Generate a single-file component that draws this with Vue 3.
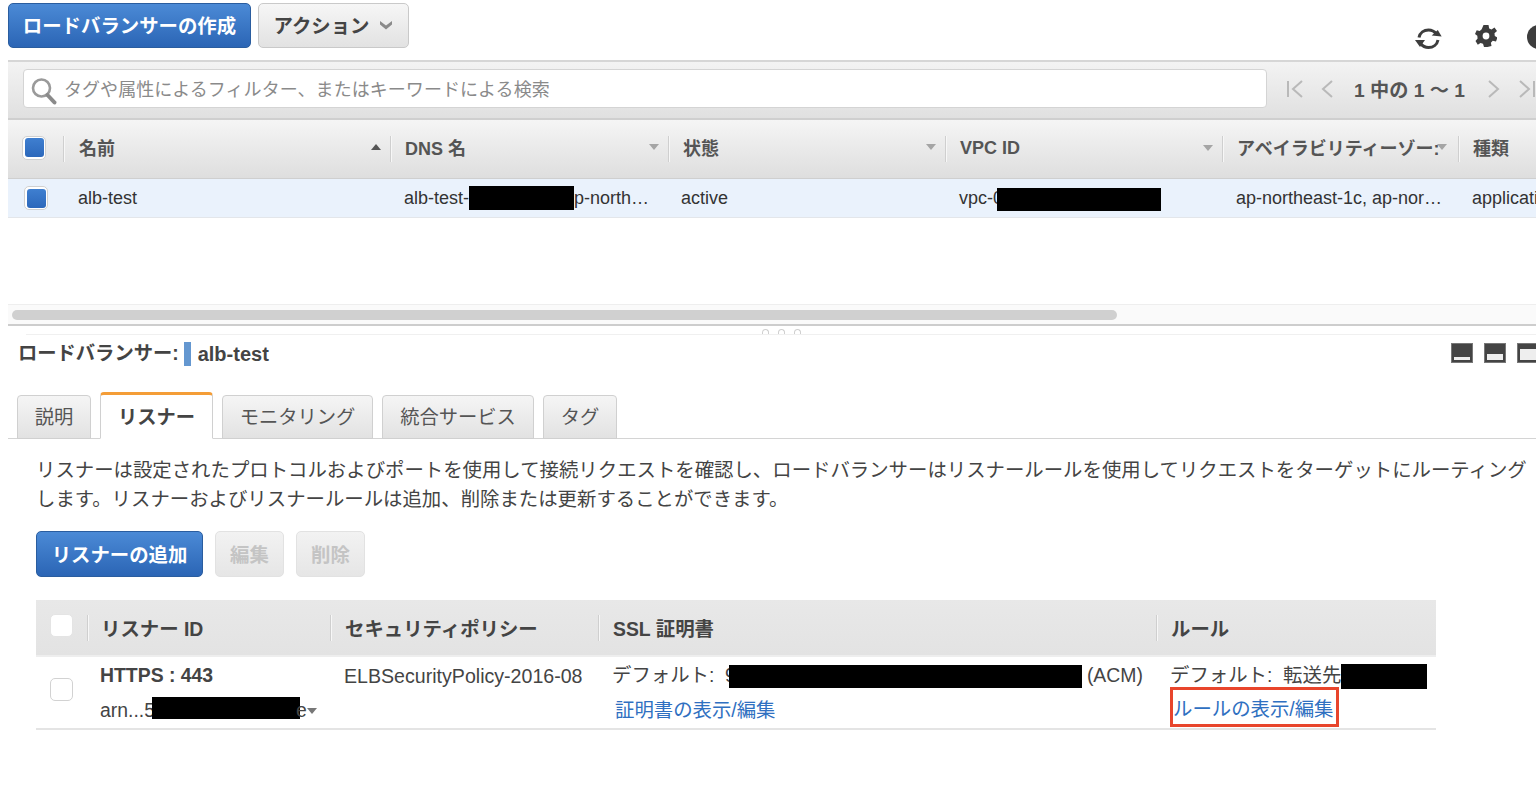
<script setup>
const topCols = [
  { label: '名前', caret: 'up', cls: 'c-name' },
  { label: 'DNS 名', caret: 'down', cls: 'c-std' },
  { label: '状態', caret: 'down', cls: 'c-std2' },
  { label: 'VPC ID', caret: 'down', cls: 'c-std2 latin' },
  { label: 'アベイラビリティーゾー:', caret: 'down', cls: 'c-az' },
  { label: '種類', caret: '', cls: 'c-type' }
]
const tabs = [
  { label: '説明', w: 74 },
  { label: 'リスナー', w: 113, active: true },
  { label: 'モニタリング', w: 151 },
  { label: '統合サービス', w: 152 },
  { label: 'タグ', w: 74 }
]
</script>

<template>
  <div class="page">
    <header class="top">
      <button class="btn primary create">ロードバランサーの作成</button>
      <button class="btn plain action">アクション
        <svg class="chev" viewBox="0 0 14 10" width="14" height="10"><path d="M1 1l6 4.500L13 1v3.500L7 9.500 1 4.500z" fill="#8a8a8a"/></svg>
      </button>
      <div class="top-icons">
        <svg width="29" height="27" viewBox="0 0 29 27" class="ic-refresh">
          <path d="M5 12.500C6 7.500 10 5 14.500 5c3.500 0 6 1.500 8 4" fill="none" stroke="#3d3d3d" stroke-width="3"/>
          <path d="M24 15c-1 5-5 7.500-9.500 7.500-3.500 0-6-1.500-8-4" fill="none" stroke="#3d3d3d" stroke-width="3"/>
          <path d="M18 11h10l-4.500-6z" fill="#3d3d3d" transform="rotate(6 23 8)"/>
          <path d="M1 15h10l-5 7z" fill="#3d3d3d"/>
        </svg>
        <svg width="22" height="22" viewBox="0 0 22 22" class="ic-gear">
          <g fill="#3d3d3d">
            <path d="M8.500 0h5l.7 3.400 2.300 1 3-1.900 2.500 3.500-2.500 2.200.3 2.800 2.700 1.500-1.500 4-3.300-.7-1.800 1.900.6 3.300-4 1h-3.500l-1-3.300-2.500-.8-2.700 1.900L.500 15.900l2.100-2.400-.3-2.700L0 9l1.700-3.800 3 .8 2-1.800z"/>
          </g>
          <circle cx="11" cy="11" r="3.400" fill="#fff"/>
        </svg>
        <span class="ic-info"></span>
      </div>
    </header>

    <section class="filter">
      <div class="search">
        <svg width="28" height="30" viewBox="0 0 28 30">
          <circle cx="11.500" cy="12" r="8.500" fill="none" stroke="#9a9a9a" stroke-width="2.600"/>
          <path d="M17.500 19l7 7.500" stroke="#8a8a8a" stroke-width="4" stroke-linecap="round"/>
        </svg>
        <span class="search-text">タグや属性によるフィルター、またはキーワードによる検索</span>
      </div>
      <div class="pager">
        <svg width="18" height="20" viewBox="0 0 18 20"><path d="M2 2v16M16 2 7 10l9 8" fill="none" stroke="#b9b9b9" stroke-width="2"/></svg>
        <svg class="p2" width="12" height="20" viewBox="0 0 12 20"><path d="M11 2 2 10l9 8" fill="none" stroke="#b9b9b9" stroke-width="2"/></svg>
        <span class="ptext">1 中の 1 〜 1</span>
        <svg class="p3" width="12" height="20" viewBox="0 0 12 20"><path d="M1 2l9 8-9 8" fill="none" stroke="#b9b9b9" stroke-width="2"/></svg>
        <svg class="p4" width="18" height="20" viewBox="0 0 18 20"><path d="M2 2l9 8-9 8M16 2v16" fill="none" stroke="#b9b9b9" stroke-width="2"/></svg>
      </div>
    </section>

    <section class="grid-top">
      <div class="thead">
        <div class="th c-check"><span class="check"><i></i></span></div>
        <div v-for="c in topCols" :key="c.label" class="th" :class="c.cls">
          <span class="th-label">{{ c.label }}</span>
          <span v-if="c.caret" class="caret" :class="c.caret"></span>
        </div>
      </div>
      <div class="trow">
        <div class="td c-check"><span class="check row-check"><i></i></span></div>
        <div class="td c-name">alb-test</div>
        <div class="td c-std">alb-test-<b class="mask m-dns"></b>p-north…</div>
        <div class="td c-active">active</div>
        <div class="td c-std">vpc-0<b class="mask m-vpc"></b></div>
        <div class="td c-az">ap-northeast-1c, ap-nor…</div>
        <div class="td c-type">applicati</div>
      </div>
    </section>

    <div class="scroll"><div class="thumb"></div></div>
    <div class="grip"><i></i><i></i><i></i></div>

    <section class="detail-head">
      <div class="title">ロードバランサー: <span class="swatch"></span> <span class="title-name">alb-test</span></div>
      <div class="layout-icons">
        <span class="li li1"></span>
        <span class="li li2"></span>
        <span class="li li3"></span>
      </div>
    </section>

    <nav class="tabs">
      <div
        v-for="t in tabs"
        :key="t.label"
        class="tab"
        :class="{ active: t.active }"
        :style="{ width: t.w + 'px' }"
      >{{ t.label }}</div>
    </nav>

    <section class="panel">
      <p class="desc">リスナーは設定されたプロトコルおよびポートを使用して接続リクエストを確認し、ロードバランサーはリスナールールを使用してリクエストをターゲットにルーティングします。リスナーおよびリスナールールは追加、削除または更新することができます。</p>
      <div class="actions">
        <button class="btn primary add">リスナーの追加</button>
        <button class="btn off edit">編集</button>
        <button class="btn off del">削除</button>
      </div>

      <div class="ltable">
        <div class="lhead">
          <div class="lh l1"><span class="box head-box"></span></div>
          <div class="lh l2">リスナー ID</div>
          <div class="lh l3">セキュリティポリシー</div>
          <div class="lh l4">SSL 証明書</div>
          <div class="lh l5">ルール</div>
        </div>
        <div class="lrow">
          <div class="lc l1"><span class="box"></span></div>
          <div class="lc l2">
            <div class="line strong">HTTPS : 443</div>
            <div class="line">arn...5<b class="mask m-arn"></b><span class="arn-end">e</span><span class="tiny-caret"></span></div>
          </div>
          <div class="lc l3"><div class="line policy">ELBSecurityPolicy-2016-08</div></div>
          <div class="lc l4">
            <div class="line cjk">デフォルト:&nbsp; 9<b class="mask m-cert"></b><span class="acm">(ACM)</span></div>
            <div class="line cjk"><a class="link cert-link">証明書の表示/編集</a></div>
          </div>
          <div class="lc l5">
            <div class="line cjk">デフォルト:&nbsp; 転送先<b class="mask m-rule"></b></div>
            <div class="line"><a class="link rule-link">ルールの表示/編集</a></div>
          </div>
        </div>
      </div>
    </section>
  </div>
</template>

<style scoped>
.page {
  width: 1536px;
  height: 795px;
  overflow: hidden;
  background: #fff;
  color: #444;
  font-family: "Liberation Sans", "Noto Sans CJK JP", sans-serif;
  font-size: 18px;
}
.btn {
  box-sizing: border-box;
  font-family: inherit;
  font-weight: 700;
  font-size: 19.4px;
  border-radius: 5px;
  padding: 0 0 2px;
  display: inline-flex;
  align-items: center;
  justify-content: center;
}
.primary {
  color: #fff;
  background: linear-gradient(#4b8ad6, #2b65b5);
  border: 1px solid #2a5d9f;
}
.plain {
  color: #444;
  background: linear-gradient(#f6f6f6, #e2e2e2);
  border: 1px solid #c9c9c9;
}
.off {
  color: #c4c4c4;
  background: linear-gradient(#f2f2f2, #e6e6e6);
  border: 1px solid #e2e2e2;
}
.top {
  height: 60px;
  box-sizing: border-box;
  padding: 3px 0 0 8px;
  display: flex;
  align-items: flex-start;
}
.create { width: 243px; height: 45px; }
.action { width: 151px; height: 45px; margin-left: 7px; gap: 10px; }
.top-icons {
  margin-left: auto;
  display: flex;
  align-items: flex-start;
  padding-top: 22px;
  margin-right: -15px;
}
.ic-gear { margin-left: 32px; }
.ic-info {
  width: 24px;
  height: 24px;
  margin-left: 30px;
  border-radius: 50%;
  background: #3d3d3d;
}

.filter {
  margin-left: 8px;
  height: 60px;
  box-sizing: border-box;
  border-top: 2px solid #d6d6d6;
  border-bottom: 2px solid #cfcfcf;
  background: linear-gradient(#f3f3f3, #e0e0e0);
  display: flex;
  align-items: center;
  padding: 0 0 3px 15px;
}
.search {
  width: 1245px;
  height: 39px;
  box-sizing: border-box;
  background: #fff;
  border: 1px solid #d4d4d4;
  border-radius: 4px;
  display: flex;
  align-items: center;
  padding-left: 6px;
  gap: 6px;
  color: #8a8a8a;
}
.search svg { margin-top: 4px; }
.search-text { padding-bottom: 2px; letter-spacing: 0.05px; }
.pager {
  margin-left: 19px;
  display: flex;
  align-items: center;
  flex: none;
  color: #555;
  font-weight: 700;
  font-size: 19.2px;
}
.p2 { margin-left: 17px; }
.ptext { margin-left: 21px; white-space: nowrap; }
.p3 { margin-left: 23px; }
.p4 { margin-left: 18px; }

.grid-top { margin-left: 8px; }
.thead, .trow {
  display: grid;
  grid-template-columns: 55px 327px 278px 277px 277px 236px 200px;
}
.thead {
  height: 59px;
  box-sizing: border-box;
  background: linear-gradient(#f5f5f5, #dedede);
  border-bottom: 1px solid #cfcfcf;
}
.th {
  box-sizing: border-box;
  display: flex;
  align-items: center;
  font-weight: 700;
  color: #555;
  position: relative;
  padding: 0 0 5px 15px;
  white-space: nowrap;
  overflow: hidden;
}
.th.latin { padding-bottom: 2px; }
.th.c-name { padding-left: 16px; }
.th::before {
  content: "";
  position: absolute;
  left: 0;
  top: 16px;
  bottom: 16px;
  width: 1px;
  background: #cfcfcf;
  box-shadow: 1px 0 0 #f7f7f7;
}
.th.c-check::before { display: none; }
.th.c-check { padding: 0 0 3px 14px; }
.td.c-check { padding: 0 0 0 14px; }
.th-label { flex: none; }
.c-az .th-label { width: 203px; overflow: hidden; }
.caret {
  margin-left: auto;
  margin-right: 9px;
  width: 0;
  height: 0;
  border-left: 5px solid transparent;
  border-right: 5px solid transparent;
}
.caret.up { border-bottom: 6px solid #555; }
.caret.down { border-top: 6px solid #a5a5a5; }
.c-az .caret { margin-left: -3px; }
.check {
  width: 24px;
  height: 24px;
  box-sizing: border-box;
  border: 1px solid #d0d0d0;
  border-radius: 5px;
  background: #fff;
  display: flex;
  align-items: center;
  justify-content: center;
}
.check i {
  width: 19px;
  height: 19px;
  border-radius: 3px;
  background: linear-gradient(#3f7fd0, #2c68bb);
}
.row-check { margin-left: 2px; }
.trow {
  height: 39px;
  box-sizing: border-box;
  background: #eaf2fc;
  border-bottom: 1px solid #e3e6ea;
  align-items: center;
  color: #333;
}
.td {
  padding-left: 14px;
  white-space: nowrap;
  overflow: hidden;
  display: flex;
  align-items: center;
}
.td.c-name { padding-left: 15px; }
.td.c-active { padding-left: 13px; }
.td.c-type { padding-left: 14px; }
.mask { display: inline-block; background: #000; flex: none; }
.m-dns { width: 105px; height: 24px; }
.m-vpc { width: 164px; height: 23px; margin-left: -6px; margin-top: 3px; }

.scroll {
  margin: 86px 0 0 8px;
  height: 22px;
  box-sizing: border-box;
  background: #fafafa;
  border-top: 1px solid #eee;
  border-bottom: 2px solid #cdcdcd;
  padding: 5px 0 0 4px;
}
.thumb {
  width: 1105px;
  height: 10px;
  border-radius: 5px;
  background: #d0d0d0;
}
.grip {
  margin-left: 26px;
  height: 9px;
  box-sizing: border-box;
  border-bottom: 1px solid #f0f0f0;
  display: flex;
  justify-content: center;
  align-items: flex-end;
  gap: 9px;
}
.grip i {
  width: 7px;
  height: 5px;
  box-sizing: border-box;
  border: 1px solid #cfcfcf;
  border-bottom: 0;
  border-radius: 4px 4px 0 0;
}

.detail-head {
  height: 59px;
  display: flex;
  align-items: flex-start;
  padding: 7px 0 0 18px;
  box-sizing: border-box;
}
.title {
  font-weight: 700;
  color: #444;
  font-size: 19.3px;
  line-height: 24px;
  white-space: nowrap;
  display: flex;
  align-items: center;
  gap: 5px;
}
.title-name { font-size: 20px; }
.swatch {
  display: inline-block;
  width: 7px;
  height: 24px;
  background: #6497d0;
  margin-right: 2px;
}
.layout-icons {
  margin-left: auto;
  display: flex;
  gap: 11px;
  margin-right: -3px;
  padding-top: 1px;
}
.li {
  width: 22px;
  height: 20px;
  box-sizing: border-box;
  background: #444;
  display: flex;
  align-items: flex-end;
  padding: 2px;
  border: 1px solid #777;
}
.li::after { content: ""; display: block; width: 100%; background: #eee; }
.li1::after { height: 3px; }
.li2::after { height: 6px; }
.li3::after { height: 11px; }

.tabs {
  margin-left: 8px;
  height: 45px;
  box-sizing: border-box;
  display: flex;
  align-items: flex-end;
  gap: 9px;
  padding-left: 9px;
  border-bottom: 1px solid #d4d4d4;
}
.tab {
  box-sizing: border-box;
  height: 44px;
  margin-bottom: -1px;
  padding-bottom: 2px;
  background: linear-gradient(#f5f5f5, #e2e2e2);
  border: 1px solid #d0d0d0;
  border-radius: 4px 4px 0 0;
  display: flex;
  align-items: center;
  justify-content: center;
  font-size: 19.3px;
  color: #555;
}
.tab.active {
  height: 47px;
  background: #fff;
  border-top: 3px solid #f49d37;
  border-bottom: 1px solid #fff;
  font-weight: 700;
  color: #444;
}

.panel { padding: 17px 0 0 36px; font-size: 19.4px; }
.desc {
  margin: 0;
  width: 1492px;
  line-height: 29px;
  color: #444;
}
.actions {
  display: flex;
  margin-top: 17px;
  gap: 12px;
}
.add { width: 167px; height: 46px; }
.edit { width: 69px; height: 46px; }
.del { width: 69px; height: 46px; }

.ltable { margin-top: 23px; width: 1400px; }
.lhead, .lrow {
  display: grid;
  grid-template-columns: 51px 243px 268px 558px 280px;
}
.lhead {
  height: 57px;
  box-sizing: border-box;
  background: linear-gradient(#e8e8e8, #e3e3e3);
  border-bottom: 2px solid #eeeeee;
}
.lh {
  box-sizing: border-box;
  position: relative;
  display: flex;
  align-items: center;
  padding-left: 15px;
  font-weight: 700;
  color: #444;
}
.lh::before {
  content: "";
  position: absolute;
  left: 0;
  top: 15px;
  bottom: 14px;
  width: 1px;
  background: #cfcfcf;
  box-shadow: 1px 0 0 #f7f7f7;
}
.lh.l1::before { display: none; }
.lh.l1 { padding: 0 0 4px 14px; }
.lh.l2 { padding-left: 14px; }
.box {
  display: block;
  width: 23px;
  height: 23px;
  box-sizing: border-box;
  border: 1px solid #d2d2d2;
  border-radius: 5px;
  background: #fff;
}
.head-box { border-color: #e4e4e4; }
.lrow {
  height: 73px;
  box-sizing: border-box;
  border-bottom: 2px solid #e4e4e4;
}
.lc.l1 { padding: 21px 0 0 14px; }
.lc { padding: 1px 0 0 14px; white-space: nowrap; }
.lc.l2 { padding-left: 13px; }
.line {
  height: 35px;
  display: flex;
  align-items: center;
}
.cjk { box-sizing: border-box; padding-bottom: 4px; }
.policy { font-size: 19.6px; padding-top: 1px; box-sizing: border-box; }
.strong { font-weight: 700; }
.m-arn { width: 148px; height: 22px; margin-left: -3px; margin-top: -6px; }
.arn-end { margin-left: -4px; }
.tiny-caret {
  margin-left: 0;
  width: 0;
  height: 0;
  border-left: 5px solid transparent;
  border-right: 5px solid transparent;
  border-top: 6px solid #777;
}
.m-cert { width: 353px; height: 23px; margin-left: -7px; margin-right: 5px; margin-top: 6px; }
.acm { padding-top: 4px; }
.m-rule { width: 86px; height: 25px; margin-top: 6px; }
.link { color: #2f70c1; }
.cert-link { margin-left: 3px; }
.rule-link {
  box-sizing: border-box;
  display: flex;
  align-items: center;
  width: 169px;
  height: 40px;
  margin-top: -7px;
  border: 3px solid #e8452c;
  white-space: nowrap;
}
</style>

<style>
html, body { margin: 0; background: #fff; }
</style>
